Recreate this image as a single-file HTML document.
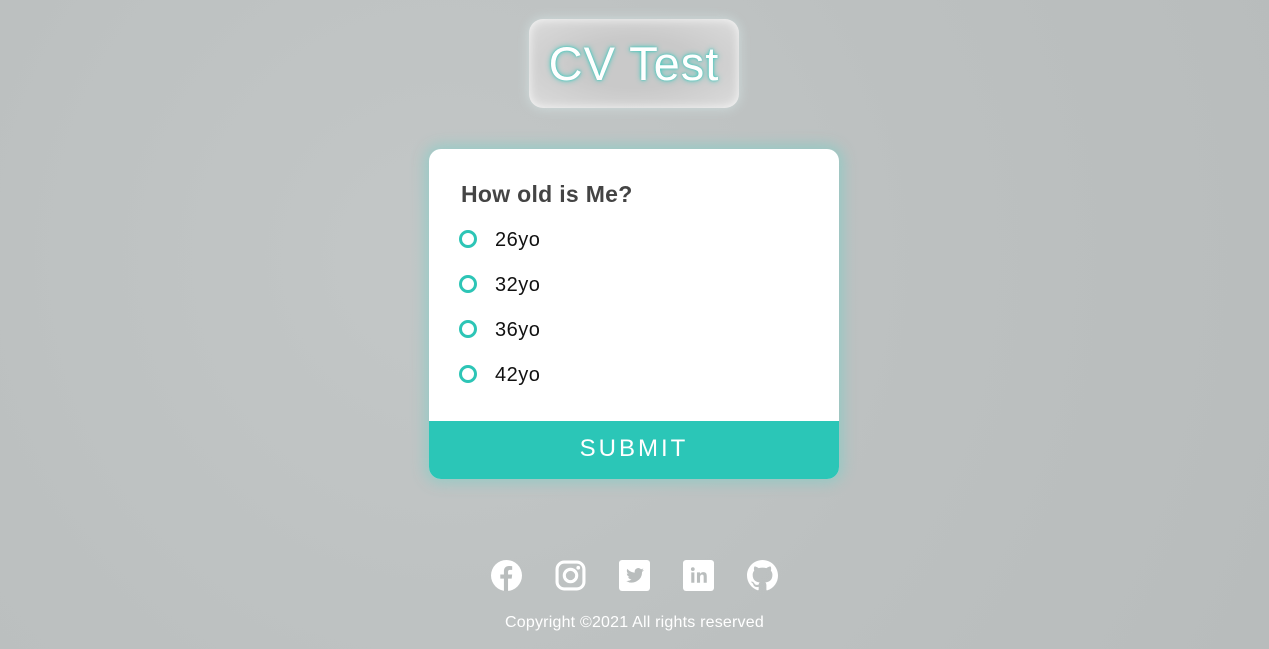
<!DOCTYPE html>
<html><head><style>
body{margin:0;width:1269px;height:649px;overflow:hidden;background:#bcc0c0;font-family:"Liberation Sans",sans-serif;position:relative;
background-image:radial-gradient(circle at 35% 40%,#c3c7c7 0,#bcc0c0 55%,#b8bcbc 100%);}
.title{position:absolute;left:529px;top:19px;width:210px;height:89px;border-radius:14px;background:radial-gradient(ellipse at center,#c9c9c9 40%,#dcdcdc 100%);box-shadow:inset 0 0 10px rgba(255,255,255,.8),0 0 12px rgba(220,240,240,.6);text-align:center;line-height:89px;color:#fff;font-size:47px;letter-spacing:1px;text-shadow:0 0 6px #3cc8bc,0 0 2px #3cc8bc;}
.card{position:absolute;left:429px;top:149px;width:410px;height:330px;background:#fff;border-radius:12px;box-shadow:0 0 14px 4px rgba(100,210,200,.45);overflow:hidden;}
.q{position:absolute;left:32px;top:32px;font-size:23px;font-weight:bold;color:#444;letter-spacing:.3px;}
.opt{position:absolute;left:30px;font-size:20px;color:#111;letter-spacing:.5px;}
.opt i{display:inline-block;width:12px;height:12px;border:3px solid #2dc5b6;border-radius:50%;vertical-align:-2px;margin-right:18px;}
.sub{position:absolute;left:0;top:272px;width:410px;height:58px;background:#2bc6b7;color:#fff;font-size:24px;letter-spacing:3px;text-align:center;line-height:56px;}
.icons svg{position:absolute;top:560px;}
.copy{position:absolute;top:614px;left:0;width:1269px;text-align:center;color:#fff;font-size:16px;letter-spacing:.2px;}
</style></head><body>
<div class="title">CV Test</div>
<div class="card">
<div class="q">How old is Me?</div>
<div class="opt" style="top:80px"><i></i>26yo</div>
<div class="opt" style="top:125px"><i></i>32yo</div>
<div class="opt" style="top:170px"><i></i>36yo</div>
<div class="opt" style="top:215px"><i></i>42yo</div>
<div class="sub">SUBMIT</div>
</div>
<div class="icons">
<svg style="left:491px" width="31" height="31" viewBox="0 0 30 30"><circle cx="15" cy="15" r="15" fill="#fff"/><path d="M16.5 30V18h3.5l.5-4h-4v-2.5c0-1.2.4-2 2-2h2V6c-.5-.1-1.7-.2-3-.2-3 0-5 1.8-5 5.1V14H9v4h3.5v12z" fill="#b9bdbd"/></svg>
<svg style="left:555px" width="31" height="31" viewBox="0 0 30 30"><rect x="2" y="2" width="26" height="26" rx="7" fill="none" stroke="#fff" stroke-width="3"/><circle cx="15" cy="15" r="6" fill="none" stroke="#fff" stroke-width="3"/><circle cx="22.5" cy="7.5" r="1.8" fill="#fff"/></svg>
<svg style="left:619px" width="31" height="31" viewBox="0 0 30 30"><rect width="30" height="30" rx="3" fill="#fff"/><path d="M24 9.5c-.6.3-1.3.5-2 .6.7-.4 1.3-1.1 1.5-1.9-.7.4-1.4.7-2.2.8a3.5 3.5 0 0 0-6 3.2c-2.9-.1-5.5-1.5-7.2-3.6-1 1.6-.5 3.700 1.1 4.700-.6 0-1.100-.2-1.600-.4 0 1.700 1.200 3.200 2.800 3.500-.5.1-1.100.2-1.600.1.5 1.400 1.800 2.400 3.300 2.400A7 7 0 0 1 7 20.3a10 10 0 0 0 15.3-8.8c.7-.5 1.300-1.100 1.700-2z" fill="#b9bdbd"/></svg>
<svg style="left:683px" width="31" height="31" viewBox="0 0 30 30"><rect width="30" height="30" rx="3" fill="#fff"/><rect x="8" y="12" width="3" height="10" fill="#b9bdbd"/><circle cx="9.5" cy="8.8" r="1.8" fill="#b9bdbd"/><path d="M13.5 12h3v1.5c.5-1 1.7-1.8 3.3-1.8 2.7 0 3.2 1.8 3.2 4.1V22h-3v-5.5c0-1.3-.1-2.4-1.5-2.4s-2 1-2 2.4V22h-3z" fill="#b9bdbd"/></svg>
<svg style="left:747px" width="31" height="31" viewBox="0 0 16 16"><path fill="#fff" d="M8 0C3.58 0 0 3.58 0 8c0 3.54 2.290 6.530 5.470 7.590.4.07.55-.17.55-.38v-1.33c-2.23.48-2.7-1.07-2.7-1.07-.36-.92-.89-1.17-.89-1.17-.73-.5.06-.49.06-.49.8.06 1.23.83 1.23.83.72 1.23 1.87.87 2.33.67.07-.52.28-.87.51-1.07-1.78-.2-3.64-.89-3.64-3.95 0-.87.31-1.59.82-2.15-.08-.2-.36-1.02.08-2.12 0 0 .67-.21 2.2.82.64-.18 1.32-.27 2-.27s1.36.09 2 .27c1.53-1.04 2.2-.82 2.2-.82.44 1.1.16 1.92.08 2.12.51.56.82 1.27.82 2.15 0 3.07-1.87 3.75-3.65 3.95.29.25.54.73.54 1.48v2.2c0 .21.15.46.55.38A8 8 0 0 0 16 8c0-4.42-3.58-8-8-8z"/></svg>
</div>
<div class="copy">Copyright ©2021 All rights reserved</div>
</body></html>
